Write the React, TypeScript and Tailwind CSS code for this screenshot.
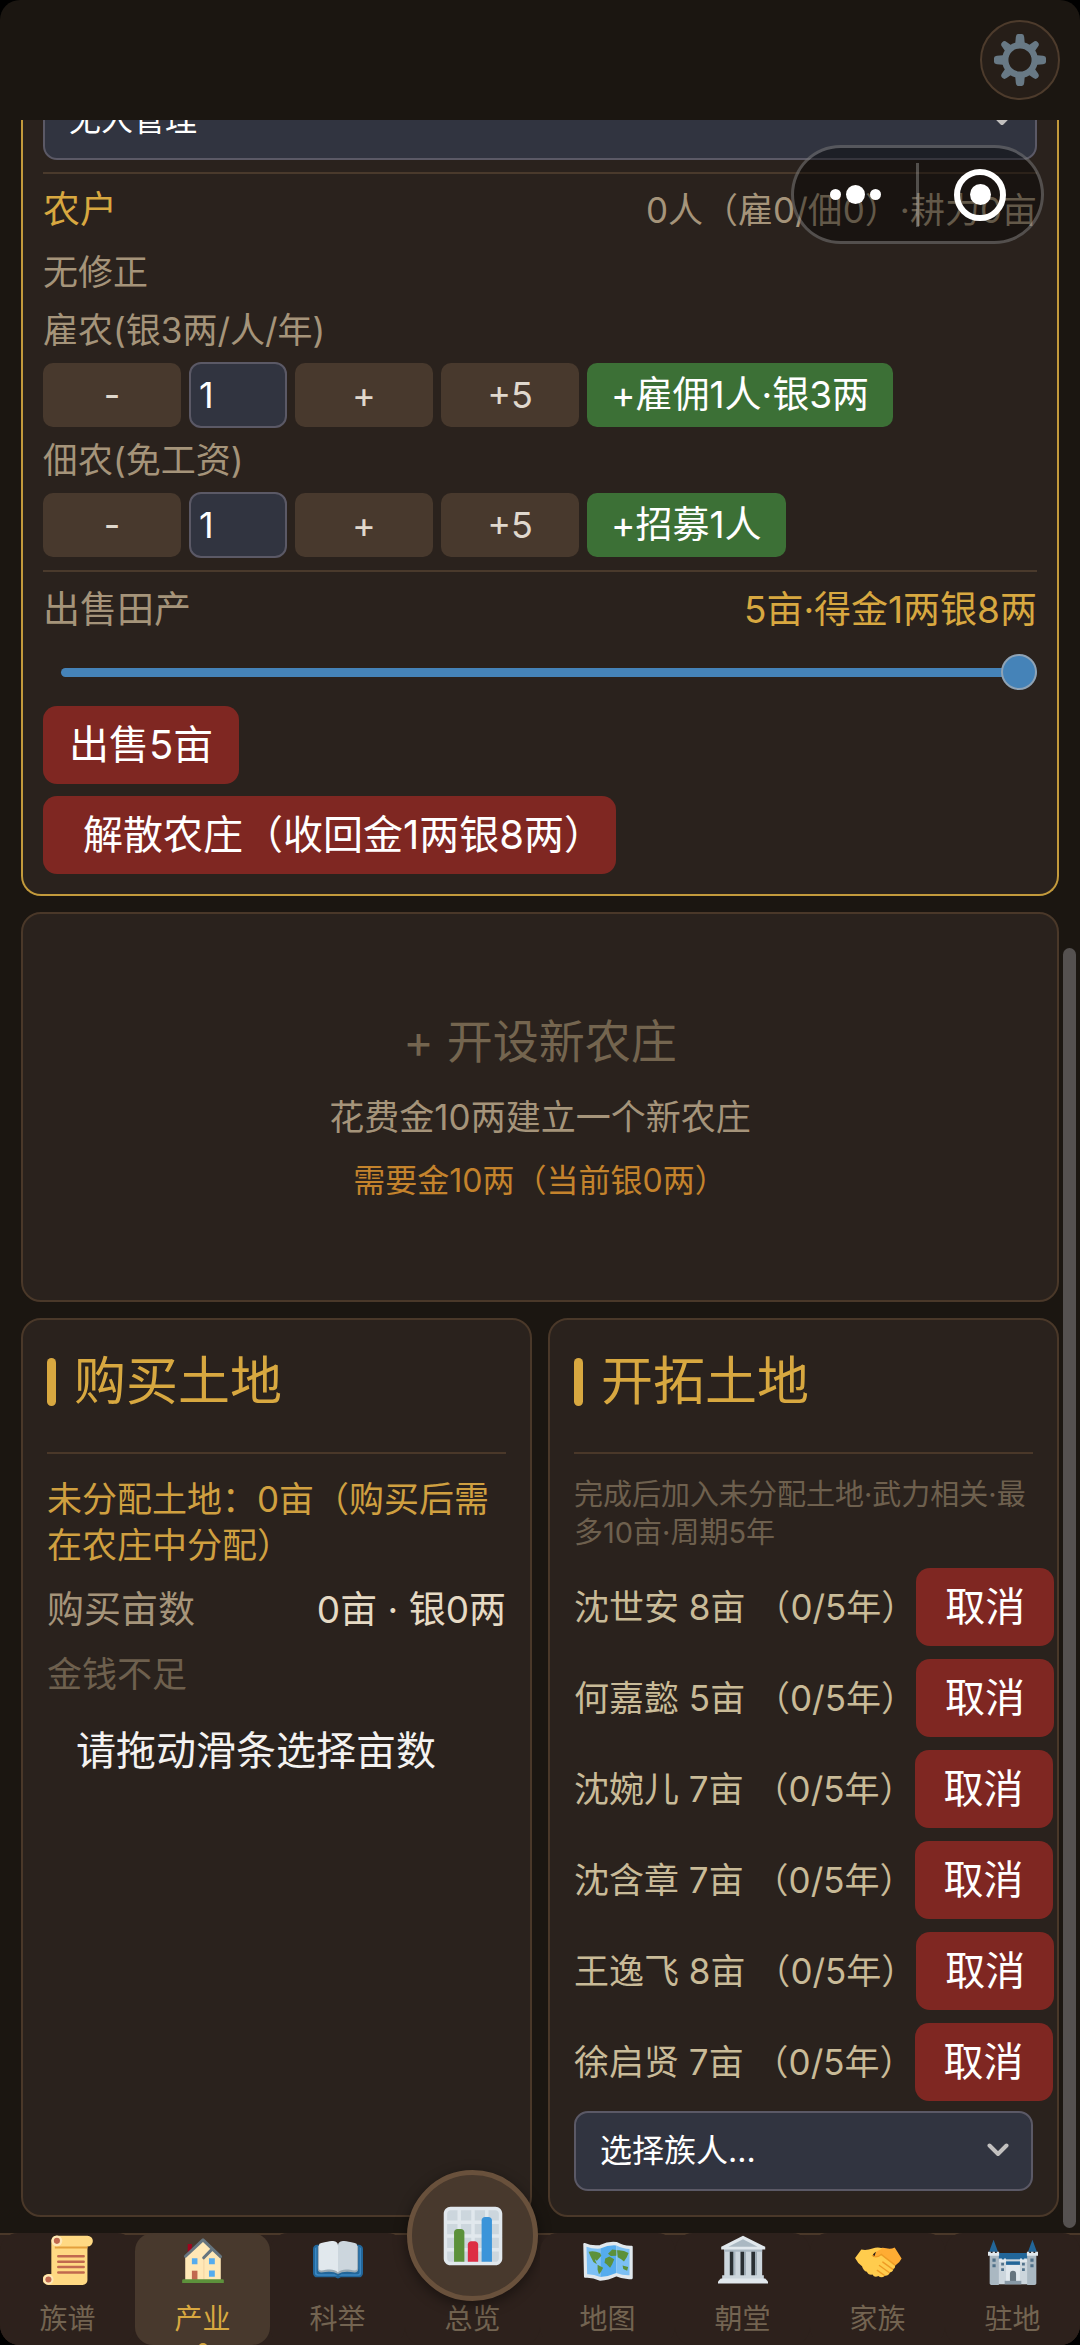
import React from 'react';
import { clsx } from 'clsx';

const reclaimers = [
    { name: '沈世安', acres: 8, year: 0 },
    { name: '何嘉懿', acres: 5, year: 0 },
    { name: '沈婉儿', acres: 7, year: 0 },
    { name: '沈含章', acres: 7, year: 0 },
    { name: '王逸飞', acres: 8, year: 0 },
    { name: '徐启贤', acres: 7, year: 0 },
];

const GearIcon = () => (
    <svg viewBox="0 0 36 36" className="w-[52px] h-[52px]" aria-hidden="true">
        <g fill="#687985">
            {[0, 90, 180, 270].map((a) => (
                <path key={a} transform={`rotate(${a} 18 18)`} d="M14.6 8 15.1 2Q15.3 0 16.6 0H19.4Q20.7 0 20.9 2L21.4 8Z" />
            ))}
            {[45, 135, 225, 315].map((a) => (
                <path key={a} transform={`rotate(${a} 18 18)`} d="M14.8 8 15.7 2.6Q16 .6 18 .6T20.3 2.6L21.2 8Z" />
            ))}
        </g>
        <circle cx="18" cy="18" r="10.2" fill="none" stroke="#687985" strokeWidth="4.400" />
    </svg>
);

const ScrollIcon = () => (
    <svg viewBox="0 0 36 36" className="w-[50px] h-[50px]" aria-hidden="true">
        <path fill="#FFD983" d="M6 4a4 4 0 0 1 4-3.500H32a3.800 3.800 0 0 1 0 7.800V32.500a3.500 3.500 0 0 1-3.500 3.500H3.800A3.900 3.900 0 0 1 3.800 28H6Z" />
        <path fill="#E39F3D" d="M8.500 8.300H32V9.800H8.500Z" />
        <circle cx="10" cy="4.200" r="3.900" fill="#FFE8B6" />
        <circle cx="10" cy="4.200" r="2.200" fill="#C1694F" />
        <circle cx="3.900" cy="32" r="3.700" fill="#FFE8B6" />
        <circle cx="3.900" cy="32" r="2.200" fill="#C1694F" />
        <path stroke="#C1694F" strokeWidth="1.800" strokeLinecap="round" d="M11 15.300H29.300M11 19.200H29.300M11 23.100H29.300M11 27H29.300" />
    </svg>
);

const HouseIcon = () => (
    <svg viewBox="0 0 36 36" className="w-[50px] h-[50px]" aria-hidden="true">
        <path fill="#A0041E" d="M7 6.500H10V13H7Z" />
        <path fill="#FFE8B6" d="M5.200 15.500 18 3.500 30.800 15.500V32.500H5.200Z" />
        <path fill="#F3D2A2" d="M18.300 17H19V32.500H18.300Z" />
        <path fill="none" stroke="#66757F" strokeWidth="2.200" strokeLinecap="round" strokeLinejoin="round" d="M5.400 15.300 18 3.500 30.600 15.600M18.500 16.400 24.400 10.400" />
        <path fill="#55ACEE" d="M10 16.700H14V21H10ZM22.300 16.700H26.500V21H22.300ZM22.300 25.600H26.500V30H22.300Z" />
        <path fill="#C1694F" d="M10 25.700H14V32.300H10Z" />
        <path fill="#5C913B" d="M4 31.800H32a1 1 0 0 1 1 1V34.500H3V32.800a1 1 0 0 1 1-1Z" />
    </svg>
);

const BookIcon = () => (
    <svg viewBox="0 0 36 36" className="w-[50px] h-[50px]" aria-hidden="true">
        <path fill="#269" d="M3 7H33a3 3 0 0 1 3 3V27.500a3 3 0 0 1-3 3H20Q18 32 16 30.500H3a3 3 0 0 1-3-3V10a3 3 0 0 1 3-3Z" />
        <path fill="#3B88C3" d="M2.500 8.500V27Q2.500 28.300 4 28.300H15.500L18 29.500 20.500 28.300H32Q33.500 28.300 33.500 27V8.500L34.600 9.500V27.500Q34.600 29.300 32.500 29.300H3.500Q1.400 29.300 1.400 27.500V9.500Z" />
        <path fill="#99AAB5" d="M3.500 8V24.500Q3.500 27 6 27 14 25.500 18 28 22 25.500 30 27 32.500 27 32.500 24.500V8Z" />
        <path fill="#E1E8ED" d="M4.200 7.500Q4.200 6 6 5.700C10 5.200 12 4 14.500 4.400 17 4.800 18 6 18 7.500V27C15 23.700 10 25 6 25.600Q4.200 25.700 4.200 24Z" />
        <path fill="#CCD6DD" d="M31.800 7.500Q31.800 6 30 5.700C26 5.200 24 4 21.500 4.400 19 4.800 18 6 18 7.500V27C21 23.700 26 25 30 25.600Q31.800 25.700 31.800 24Z" />
    </svg>
);

const MapIcon = () => (
    <svg viewBox="0 0 36 36" className="w-[50px] h-[50px]" aria-hidden="true">
        <path fill="#E1E8ED" stroke="#E1E8ED" strokeWidth="1.600" strokeLinejoin="round" d="M1 6.500Q6 8.800 12.500 8 18.500 5 24 5.800 29 8.800 35 8.500V31Q29.500 31.500 24 29 18 31.800 12.500 32.200 6.500 29.500 1.500 30Z" />
        <path fill="#7CC0F5" d="M2.500 8.500Q7 10.200 12.500 9.800V30.300Q7.500 28 3 28.200Z" />
        <path fill="#55ACEE" d="M12.500 9.800Q18.500 7 24 7.500V27.300Q18.500 29.800 12.500 30.300Z" />
        <path fill="#7CC0F5" d="M24 7.500Q29 10 33.500 10V29Q29 29.300 24 27.300Z" />
        <path fill="#5C913B" d="M4 12Q8 11 12.300 13L13.200 15 10 18.500 8.500 17.500 10 21 7.500 19.500 5.500 15.500ZM10.500 21.500 14.500 23.500 13 26.500 11.500 28.200 10.500 25ZM16 17 19 15.500 22.500 17.500 21 21 19.500 23.500 17 21 15.500 20ZM18 13.500 21 10.500 24 10.800V15L20 15.200ZM24.500 11Q29 10.500 32.800 13L31.500 16 29.500 19 27.500 17.500 25 16ZM28.500 22 32.500 23 31.800 25.800 29 24.500Z" />
    </svg>
);

const HallIcon = () => (
    <svg viewBox="0 0 36 36" className="w-[50px] h-[50px]" aria-hidden="true">
        <path fill="#292F33" d="M7 11H29V30H7Z" />
        <path fill="#CCD6DD" d="M4.500 10H8.500V30H4.500ZM12.300 10H16.200V30H12.300ZM20.100 10H24V30H20.100ZM28 10H31.800V30H28Z" />
        <path fill="#AAB8C2" d="M4.500 10H31.800V12H4.500ZM11 12H12.300V30H11ZM18.800 12H20.100V30H18.800ZM26.700 12H28V30H26.700Z" />
        <path fill="#E1E8ED" d="M18 .500 34 8.500V10.500H2.300V8.500Z" />
        <path fill="#AAB8C2" d="M18 3 28.500 8.500H7.500Z" />
        <path fill="#CCD6DD" d="M3 29H33V32H3Z" />
        <path fill="#E1E8ED" d="M2 31.300H34L36 33.500V35H0V33.500Z" />
    </svg>
);

const HandshakeIcon = () => (
    <svg viewBox="0 0 36 36" className="w-[50px] h-[50px]" aria-hidden="true">
        <path fill="#FFAC33" d="M17 10.500Q20 8.500 24 9.500 27 10.400 30 9L35 17Q34 19.500 30.500 22L27 25 15 17Z" />
        <path fill="#FFCC4D" d="M6 10.500Q10 11.200 14 9.800 18 8.300 21 9.800L16 12.500Q13.500 14.500 14.500 15.500 16.500 16.500 20 14L30 21.500Q31 23.500 29 24.500 29 26.500 26.500 27 25.500 29.500 23 29.300 20.500 31.500 18.300 29.500 15.500 31 14 28.500 11 29 10 26.500 7.500 26 6.500 22.500 3.500 20.500 1.500 16.500Z" />
        <path fill="none" stroke="#EE9B24" strokeWidth="1" strokeLinecap="round" d="M14 14.800Q16.500 17 20.300 14L30 21.500M21.500 19.500 28.500 24.600M19 22 26 27M17.500 25.500 22.500 29" />
    </svg>
);

const CastleIcon = () => (
    <svg viewBox="0 0 36 36" className="w-[50px] h-[50px]" aria-hidden="true">
        <path fill="#269" d="M4 3.500 7.200 12H.800ZM32 3.500 35.200 12H28.800ZM7 13H29V18H7Z" />
        <path fill="#CCD6DD" d="M7 17.500H29V35.500H7Z" />
        <path fill="#AAB8C2" d="M1.200 14H7.800V36H2.500Q1.200 36 1.200 35ZM28.200 14H34.800V35Q34.800 36 33.500 36H28.200Z" />
        <path fill="#E1E8ED" d="M0 12H2V13H3.300V12H5V13H6.300V12H8V15H0ZM28 12H29.700V13H31V12H32.700V13H34V12H36V15H28ZM8 17H10V18H11.500V17H13V19.500H8ZM23 17H24.500V18H26V17H28V19.500H23ZM13 21.500H23V34H13Z" />
        <path fill="#269" d="M13 19H23V21.500H13Z" />
        <path fill="#50718A" d="M3.200 17H5.500V19.300H3.200ZM3.200 21H5.500V23.300H3.200ZM30.500 17H32.800V19.300H30.500ZM30.500 21H32.800V23.300H30.500ZM9.500 20H11.500V22H9.500ZM9.500 24H11.500V26H9.500ZM24.500 20H26.500V22H24.500ZM24.500 24H26.500V26H24.500Z" />
        <path fill="#66757F" d="M15.800 34V28Q15.800 25.800 18 25.800T20.200 28V34Z" />
        <path fill="#8899A6" d="M12 33H24V35.500H12Z" />
    </svg>
);

const ChartIcon = () => (
    <svg viewBox="0 0 36 36" className="w-[62px] h-[62px]" aria-hidden="true">
        <rect x="2" y="2" width="32" height="32" rx="3" fill="#CCD6DD" />
        <path fill="#E1E8ED" d="M31 1H5C2.791 1 1 2.791 1 5v26c0 2.209 1.791 4 4 4h26c2.209 0 4-1.791 4-4V5c0-2.209-1.791-4-4-4zm0 2c1.103 0 2 .897 2 2v4h-6V3h4zm-4 16h6v6h-6v-6zm0-2v-6h6v6h-6zM25 3v6h-6V3h6zm-6 8h6v6h-6v-6zm0 8h6v6h-6v-6zM17 3v6h-6V3h6zm-6 8h6v6h-6v-6zm0 8h6v6h-6v-6zM3 5c0-1.103.897-2 2-2h4v6H3V5zm0 6h6v6H3v-6zm0 8h6v6H3v-6zm2 14c-1.103 0-2-.897-2-2v-4h6v6H5zm6 0v-6h6v6h-6zm8 0v-6h6v6h-6zm12 0h-4v-6h6v4c0 1.103-.897 2-2 2z" />
        <path fill="#5C913B" d="M13 33H7V16c0-1.104.896-2 2-2h2c1.104 0 2 .896 2 2v17z" />
        <path fill="#3B94D9" d="M29 33h-6V9c0-1.104.896-2 2-2h2c1.104 0 2 .896 2 2v24z" />
        <path fill="#DD2E44" d="M21 33h-6V23c0-1.104.896-2 2-2h2c1.104 0 2 .896 2 2v10z" />
    </svg>
);

const tabs = [
    { label: '族谱', icon: <ScrollIcon /> },
    { label: '产业', icon: <HouseIcon />, active: true },
    { label: '科举', icon: <BookIcon /> },
    { label: '总览', icon: <ChartIcon />, raised: true },
    { label: '地图', icon: <MapIcon /> },
    { label: '朝堂', icon: <HallIcon /> },
    { label: '家族', icon: <HandshakeIcon /> },
    { label: '驻地', icon: <CastleIcon /> },
];

const Select: React.FC<{ label: string; value: string }> = ({ label, value }) => (
    <div className="relative">
        <select
            aria-label={label}
            className="block w-full h-20 appearance-none rounded-[14px] border-2 border-[#5b5966] bg-[#313440] px-6 text-[32px] leading-[48px] text-white"
        >
            <option>{value}</option>
        </select>
        <svg viewBox="0 0 22 14" className="pointer-events-none absolute right-6 top-8 w-[22px] h-[14px]" aria-hidden="true">
            <path d="M2.500 2.500 11 11 19.500 2.500" fill="none" stroke="#c2c0bf" strokeWidth="4" strokeLinecap="round" strokeLinejoin="round" />
        </svg>
    </div>
);

const StepButton: React.FC<{ children: React.ReactNode }> = ({ children }) => (
    <button className="h-16 w-[138px] rounded-[10px] bg-[#48392d] text-[36px] leading-[48px] text-[#e0d8cd]">{children}</button>
);

const DangerButton: React.FC<{ children: React.ReactNode; className?: string }> = ({ children, className }) => (
    <button className={clsx('h-[78px] shrink-0 whitespace-nowrap rounded-[14px] bg-[#7f2722] text-[40px] leading-[48px] text-white', className || 'px-[29px]')}>
        {children}
    </button>
);

const HireRow: React.FC<{ id: string; label: string; action: string }> = ({ id, label, action }) => (
    <>
        <label htmlFor={id} className="block text-[35px] leading-[48px] text-[#a5947a]">{label}</label>
        <div className="flex items-center gap-2 h-[66px]">
            <StepButton>-</StepButton>
            <input
                id={id}
                type="text"
                inputMode="numeric"
                defaultValue="1"
                className="h-[66px] w-[98px] rounded-[12px] border-2 border-[#5b5966] bg-[#313440] px-2 text-[36px] leading-[48px] text-white"
            />
            <StepButton>+</StepButton>
            <StepButton>+5</StepButton>
            <button className="h-16 rounded-[10px] bg-[#3c7036] px-6 text-[37px] leading-[48px] text-white">{action}</button>
        </div>
    </>
);

const PanelTitle: React.FC<{ children: React.ReactNode }> = ({ children }) => (
    <div className="flex items-center gap-[18px] border-b-2 border-[#4a3829] pb-8">
        <span className="h-12 w-[9px] rounded-full bg-[#d8a840]" />
        <h2 className="text-[52px] leading-[76px] text-[#d8a840]">{children}</h2>
    </div>
);

const App: React.FC = () => {
    return (
        <div className="bg-black">
            <div
                className="relative flex min-h-screen flex-col overflow-hidden rounded-[20px] bg-[#1b1611] [text-spacing-trim:space-all]"
                style={{ fontFamily: 'Inter, "Noto Sans CJK SC", sans-serif' }}
            >
                {/* Header */}
                <header className="flex h-[120px] shrink-0 items-center justify-end px-5">
                    <button aria-label="设置" className="flex h-20 w-20 items-center justify-center rounded-full border-2 border-[#4d3b2c] bg-[#261e18]">
                        <GearIcon />
                    </button>
                </header>

                {/* Scrolled content */}
                <main className="flex flex-1 flex-col gap-4 overflow-hidden px-[21px] pb-4">
                    {/* Farm detail, partly scrolled under the header */}
                    <section className="-mt-10 rounded-b-[20px] border-2 border-t-0 border-[#c39a3c] bg-[#2a221d] px-5 pb-5">
                        <Select label="管理人" value="无人管理" />
                        <div className="mt-3 border-t-2 border-[#4a3a2c] pt-3">
                            <div className="flex justify-between leading-[48px]">
                                <h3 className="text-[37px] text-[#d8a840]">农户</h3>
                                <span className="text-[35px] text-[#a5947a]">0人（雇0/佃0）·耕力0亩</span>
                            </div>
                            <p className="mt-3.5 mb-2.5 text-[35px] leading-[48px] text-[#a5947a]">无修正</p>
                            <div className="flex flex-col gap-2">
                                <HireRow id="hired" label="雇农(银3两/人/年)" action="+雇佣1人·银3两" />
                                <HireRow id="tenant" label="佃农(免工资)" action="+招募1人" />
                            </div>
                        </div>
                        <div className="mt-3 border-t-2 border-[#4a3a2c] pt-3.5">
                            <div className="flex justify-between text-[37px] leading-[48px]">
                                <label htmlFor="sell" className="text-[#a5947a]">出售田产</label>
                                <span className="text-[#d8a840]">5亩·得金1两银8两</span>
                            </div>
                            <div className="mt-5 flex pl-[18px]">
                                <input
                                    id="sell"
                                    type="range"
                                    min={0}
                                    max={5}
                                    defaultValue={5}
                                    className="h-9 w-full appearance-none bg-transparent [&::-webkit-slider-runnable-track]:h-[9px] [&::-webkit-slider-runnable-track]:rounded-full [&::-webkit-slider-runnable-track]:bg-[#4583b8] [&::-webkit-slider-thumb]:-mt-[14px] [&::-webkit-slider-thumb]:h-9 [&::-webkit-slider-thumb]:w-9 [&::-webkit-slider-thumb]:appearance-none [&::-webkit-slider-thumb]:rounded-full [&::-webkit-slider-thumb]:border-2 [&::-webkit-slider-thumb]:border-[#8fa3b5] [&::-webkit-slider-thumb]:bg-[#4583b8]"
                                />
                            </div>
                            <div className="mt-4 flex flex-col items-start gap-3">
                                <DangerButton className="px-[26px]">出售5亩</DangerButton>
                                <DangerButton className="pl-10 pr-3">解散农庄（收回金1两银8两）</DangerButton>
                            </div>
                        </div>
                    </section>

                    {/* New farm */}
                    <button className="flex min-h-[390px] flex-col items-center justify-center rounded-[20px] border-2 border-[#4a3829] bg-[#2a221d]">
                        <span className="text-[46px] leading-[64px] text-[#74654f]">+ 开设新农庄</span>
                        <span className="mt-5 text-[35px] leading-[48px] text-[#a5947a]">花费金10两建立一个新农庄</span>
                        <span className="mt-4 text-[32px] leading-[48px] text-[#c4832c]">需要金10两（当前银0两）</span>
                    </button>

                    <div className="grid flex-1 grid-cols-2 gap-4">
                        {/* Buy land */}
                        <section className="min-w-0 rounded-[20px] border-2 border-[#4a3829] bg-[#2a221d] p-6">
                            <PanelTitle>购买土地</PanelTitle>
                            <p className="mt-[22px] text-[35px] leading-[46px] text-[#d0a040]">未分配土地：0亩（购买后需在农庄中分配）</p>
                            <div className="mt-[18px] flex justify-between text-[37px] leading-[48px]">
                                <span className="text-[#a5947a]">购买亩数</span>
                                <span className="text-[#e6dac4]">0亩 · 银0两</span>
                            </div>
                            <p className="mt-4 text-[35px] leading-[48px] text-[#6e604e]">金钱不足</p>
                            <button className="mt-3.5 h-[78px] px-[29px] text-[40px] leading-[48px] text-[#f4f2f0]">请拖动滑条选择亩数</button>
                        </section>

                        {/* Reclaim land */}
                        <section className="min-w-0 rounded-[20px] border-2 border-[#4a3829] bg-[#2a221d] p-6">
                            <PanelTitle>开拓土地</PanelTitle>
                            <p className="mt-[22px] text-[29px] leading-[38px] text-[#6e604e]">完成后加入未分配土地·武力相关·最多10亩·周期5年</p>
                            <ul className="mt-4 mb-2.5 flex flex-col gap-[13px]">
                                {reclaimers.map((item) => (
                                    <li key={item.name} className="flex items-center">
                                        <span className="whitespace-nowrap text-[35px] leading-[48px] text-[#c9bb98]">
                                            {item.name} {item.acres}亩 （{item.year}/5年）
                                        </span>
                                        <DangerButton>取消</DangerButton>
                                    </li>
                                ))}
                            </ul>
                            <Select label="选择族人" value="选择族人..." />
                        </section>
                    </div>
                </main>

                {/* Bottom tabs */}
                <nav className="grid h-28 shrink-0 grid-cols-8 bg-[linear-gradient(#4a3829_2px,#2d211c_2px)]">
                    {tabs.map((tab) => (
                        <button
                            key={tab.label}
                            className={clsx(
                                'relative flex flex-col items-center justify-end rounded-[18px] pb-2 text-[28px] leading-9',
                                tab.active ? 'bg-[#48392d] text-[#d8a840]' : 'bg-[#2d211c] text-[#736451]'
                            )}
                        >
                            {tab.raised ? (
                                <span className="absolute -top-[63px] flex h-[131px] w-[131px] items-center justify-center rounded-full border-[5px] border-[#69513c] bg-[#48392d] shadow-[0_4px_14px_rgba(0,0,0,0.45)]">
                                    {tab.icon}
                                </span>
                            ) : (
                                <span className="mb-4">{tab.icon}</span>
                            )}
                            {tab.label}
                            {tab.active && <span className="absolute -bottom-2 h-2.5 w-2.5 rounded-full bg-[#d8a840]" />}
                        </button>
                    ))}
                </nav>

                {/* Scroll position */}
                <div className="absolute right-1 top-[948px] bottom-[117px] w-[13px] rounded-full bg-[#555150]" />

                {/* Mini program capsule */}
                <div className="absolute right-9 top-[145px] flex h-[99px] w-[253px] items-center rounded-full border-[3px] border-white/25 bg-black/40">
                    <button aria-label="更多" className="flex h-full flex-1 items-center justify-center gap-[5px]">
                        <span className="h-[11px] w-[11px] rounded-full bg-white" />
                        <span className="h-[19px] w-[19px] rounded-full bg-white" />
                        <span className="h-[11px] w-[11px] rounded-full bg-white" />
                    </button>
                    <span className="h-16 w-[3px] bg-white/25" />
                    <button aria-label="关闭" className="flex h-full flex-1 items-center justify-center">
                        <span className="flex h-[52px] w-[52px] items-center justify-center rounded-full border-[6px] border-white">
                            <span className="h-[21px] w-[21px] rounded-full bg-white" />
                        </span>
                    </button>
                </div>
            </div>
        </div>
    );
};

export default App;
